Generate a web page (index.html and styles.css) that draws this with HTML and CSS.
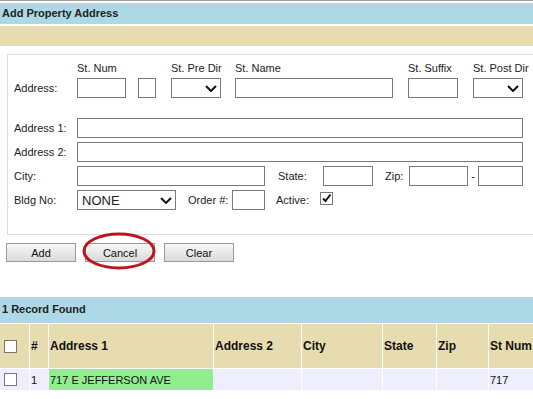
FILE: index.html
```html
<!DOCTYPE html>
<html lang="en">
<head>
    <meta charset="UTF-8">
    <title>Add Property Address</title>
    <link rel="stylesheet" href="styles.css">
</head>
<body>
    <div class="page">
        <div class="title-bar">Add Property Address</div>
        <div class="tan-bar"></div>

        <!-- Address form -->
        <div class="form-box">
            <div class="row head-row">
                <span class="lbl"></span>
                <span class="f-num">St. Num</span>
                <span class="f-unit"></span>
                <span class="f-pre">St. Pre Dir</span>
                <span class="f-name">St. Name</span>
                <span class="f-suffix">St. Suffix</span>
                <span class="f-post">St. Post Dir</span>
            </div>
            <div class="row">
                <span class="lbl">Address:</span>
                <input class="f-num" type="text">
                <input class="f-unit" type="text">
                <div class="sel f-pre"><svg class="chev" viewBox="0 0 12 7"><path d="M1 1 L6 6 L11 1"/></svg></div>
                <input class="f-name" type="text">
                <input class="f-suffix" type="text">
                <div class="sel f-post"><svg class="chev" viewBox="0 0 12 7"><path d="M1 1 L6 6 L11 1"/></svg></div>
            </div>
            <div class="row gap-top">
                <span class="lbl">Address 1:</span>
                <input class="f-wide" type="text">
            </div>
            <div class="row">
                <span class="lbl">Address 2:</span>
                <input class="f-wide" type="text">
            </div>
            <div class="row">
                <span class="lbl">City:</span>
                <input class="f-city" type="text">
                <span class="lbl-state">State:</span>
                <input class="f-state" type="text">
                <span class="lbl-zip">Zip:</span>
                <input class="f-zip" type="text">
                <span class="dash">-</span>
                <input class="f-zip4" type="text">
            </div>
            <div class="row">
                <span class="lbl">Bldg No:</span>
                <div class="sel f-bldg">NONE<svg class="chev" viewBox="0 0 12 7"><path d="M1 1 L6 6 L11 1"/></svg></div>
                <span class="lbl-order">Order #:</span>
                <input class="f-order" type="text">
                <span class="lbl-active">Active:</span>
                <span class="check"><svg viewBox="0 0 11 11"><path d="M2 5.5 L4.5 8 L9.5 1.5"/></svg></span>
            </div>
        </div>

        <div class="buttons">
            <button class="btn">Add</button>
            <span class="mark-wrap">
                <button class="btn">Cancel</button>
                <svg class="ring" viewBox="0 0 76 40"><ellipse cx="38" cy="20" rx="35" ry="17"/></svg>
            </span>
            <button class="btn">Clear</button>
        </div>

        <div class="record-bar">1 Record Found</div>

        <!-- Results -->
        <table class="results">
            <thead>
                <tr>
                    <th class="c-chk"><span class="box"></span></th>
                    <th class="c-num">#</th>
                    <th class="c-a1">Address 1</th>
                    <th class="c-a2">Address 2</th>
                    <th class="c-city">City</th>
                    <th class="c-state">State</th>
                    <th class="c-zip">Zip</th>
                    <th class="c-stnum">St Num</th>
                </tr>
            </thead>
            <tbody>
                <tr>
                    <td class="c-chk"><span class="box"></span></td>
                    <td>1</td>
                    <td class="hit">717 E JEFFERSON AVE</td>
                    <td></td>
                    <td></td>
                    <td></td>
                    <td></td>
                    <td>717</td>
                </tr>
            </tbody>
        </table>
    </div>
</body>
</html>
```

FILE: styles.css
```css
html, body {
    margin: 0;
    overflow: hidden;
}
body {
    font-family: "Liberation Sans", Arial, sans-serif;
    font-size: 11px;
    color: #222;
    background: #fff;
}
.page {
    border-top: 1px solid #a0a0a0;
    padding-top: 2px;
}
.title-bar {
    height: 21px;
    line-height: 21px;
    background: #add8e6;
    font-weight: bold;
    padding-left: 2px;
}
.tan-bar {
    height: 20px;
    margin-top: 2px;
    background: #e6dcb0;
}

/* form */
.form-box {
    margin: 8px -20px 0 7px;
    border: 1px solid #dcdcdc;
    padding: 6px 0 20px 6px;
}
.row {
    display: flex;
    align-items: center;
    height: 20px;
    margin-bottom: 4px;
    white-space: nowrap;
}
.head-row {
    height: 13px;
    margin-bottom: 4px;
}
.gap-top {
    margin-top: 20px;
}
.row > * {
    flex: none;
}
.lbl {
    width: 63px;
}
input, .sel {
    box-sizing: border-box;
    height: 20px;
    border: 1px solid #7a7a7a;
    background: #fff;
    margin: 0;
    padding: 0 3px;
    font: inherit;
}
.sel {
    position: relative;
    display: flex;
    align-items: center;
}
.chev {
    position: absolute;
    right: 3px;
    top: 6px;
    width: 12px;
    height: 7px;
    fill: none;
    stroke: #111;
    stroke-width: 2;
}
.f-num { width: 49px; }
.f-unit { width: 18px; margin-left: 12px; }
.f-pre { width: 50px; margin-left: 15px; }
.f-name { width: 158px; margin-left: 14px; }
.f-suffix { width: 50px; margin-left: 15px; }
.f-post { width: 50px; margin-left: 15px; }
.f-wide { width: 446px; }
.f-city { width: 188px; }
.lbl-state { width: 45px; margin-left: 13px; }
.f-state { width: 50px; }
.lbl-zip { width: 24px; margin-left: 12px; }
.f-zip { width: 59px; }
.dash { width: 10px; text-align: center; }
.f-zip4 { width: 45px; }
.f-bldg {
    width: 99px;
    font-size: 13px;
    padding-left: 4px;
}
.lbl-order { width: 44px; margin-left: 12px; }
.f-order { width: 33px; }
.lbl-active { width: 44px; margin-left: 11px; }
.check {
    width: 13px;
    height: 13px;
    box-sizing: border-box;
    border: 1px solid #7a7a7a;
    margin-top: -3px;
}
.check svg {
    display: block;
    width: 11px;
    height: 11px;
    fill: none;
    stroke: #111;
    stroke-width: 2;
}

/* buttons */
.buttons {
    display: flex;
    gap: 9px;
    margin: 8px 0 0 6px;
}
.btn {
    width: 70px;
    height: 19px;
    padding: 0;
    border: 1px solid #9a9a9a;
    background: linear-gradient(#f7f7f7, #dadada);
    font-family: "Liberation Sans", Arial, sans-serif;
    font-size: 11px;
    color: #111;
}
.mark-wrap {
    position: relative;
    display: block;
}
.mark-wrap .btn {
    display: block;
}
.ring {
    position: absolute;
    left: -4px;
    top: -12px;
    width: 76px;
    height: 40px;
    fill: none;
    stroke: #c0141c;
    stroke-width: 3;
}

/* results */
.record-bar {
    margin-top: 35px;
    height: 26px;
    line-height: 24px;
    background: #add8e6;
    font-weight: bold;
    padding-left: 2px;
}
.results {
    border-collapse: separate;
    border-spacing: 1px;
    margin-left: -1px;
    table-layout: fixed;
    width: 574px;
}
.results th, .results td {
    padding: 0 0 0 1px;
    text-align: left;
    white-space: nowrap;
    overflow: hidden;
}
.results th {
    height: 44px;
    background: #e6dcb0;
    font-size: 12px;
    color: #111;
}
.results td {
    height: 21px;
    background: #eeeeff;
    font-size: 11px;
    color: #111;
}
.results td.hit {
    background: #90ee90;
}
.results .c-chk { width: 25px; padding-left: 4px; }
.c-num { width: 17px; }
.c-a1 { width: 163px; }
.c-a2 { width: 86px; }
.c-city { width: 79px; }
.c-state { width: 52px; }
.c-zip { width: 50px; }
.c-stnum { width: 82px; }
.box {
    display: block;
    width: 13px;
    height: 13px;
    box-sizing: border-box;
    border: 1px solid #777;
    background: #fff;
}
```
